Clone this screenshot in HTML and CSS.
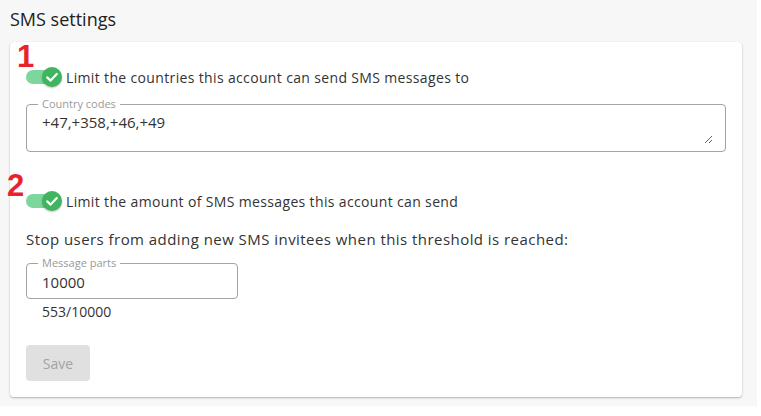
FILE: index.html
```html
<!DOCTYPE html>
<html lang="en">

<head>
  <meta charset="UTF-8">
  <title>SMS settings</title>
  <link rel="stylesheet" href="styles.css">
</head>

<body>
  <div class="page">
    <h2 class="title">SMS settings</h2>

    <div class="card">
      <span class="marker marker-one">1</span>
      <label class="switch-row">
        <span class="switch">
          <span class="knob">
            <svg width="20" height="20" viewBox="0 0 20 20"><polyline points="5.2,10.4 8.6,13.6 14.8,7" fill="none" stroke="#fff" stroke-width="2.2" stroke-linecap="round" stroke-linejoin="round"/></svg>
          </span>
        </span>
        Limit the countries this account can send SMS messages to
      </label>

      <fieldset class="field field-wide">
        <legend>Country codes</legend>
        <textarea class="codes">+47,+358,+46,+49</textarea>
      </fieldset>

      <span class="marker marker-two">2</span>
      <label class="switch-row switch-row-two">
        <span class="switch">
          <span class="knob">
            <svg width="20" height="20" viewBox="0 0 20 20"><polyline points="5.2,10.4 8.6,13.6 14.8,7" fill="none" stroke="#fff" stroke-width="2.2" stroke-linecap="round" stroke-linejoin="round"/></svg>
          </span>
        </span>
        Limit the amount of SMS messages this account can send
      </label>

      <p class="hint">Stop users from adding new SMS invitees when this threshold is reached:</p>

      <fieldset class="field field-small">
        <legend>Message parts</legend>
        <input class="parts" type="text" value="10000">
      </fieldset>
      <div class="usage">553/10000</div>

      <button class="save" disabled>Save</button>
    </div>
  </div>
</body>

</html>
```

FILE: styles.css
```css
body {
  margin: 0;
  background: #fff;
  font-family: "Open Sans", "Liberation Sans", sans-serif;
  color: #333;
}
.page {
  width: 757px;
  height: 406px;
  box-sizing: border-box;
  padding: 9px 15px 0 10px;
  background: #f7f7f7;
}
.title {
  margin: 0 0 13px 0;
  font-size: 18px;
  line-height: 20px;
  font-weight: 400;
  color: #222;
}
.card {
  position: relative;
  height: 355px;
  box-sizing: border-box;
  padding: 24px 16px 16px 16px;
  background: #fff;
  border-radius: 4px;
  box-shadow: 0 1px 2px rgba(0, 0, 0, 0.28), 0 0 1px rgba(0, 0, 0, 0.08);
}
.marker {
  position: absolute;
  font-family: "Liberation Sans", sans-serif;
  font-weight: 700;
  font-size: 31px;
  line-height: 1;
  color: #e8232b;
}
.marker-one {
  left: 7px;
  top: -1px;
}
.marker-two {
  left: -3px;
  top: 128px;
}
.switch-row {
  display: flex;
  align-items: center;
  height: 22px;
  font-size: 14px;
  letter-spacing: 0.35px;
  color: #333;
}
.switch-row-two {
  margin-top: 38px;
}
.switch {
  position: relative;
  width: 34px;
  height: 14px;
  margin: 0 6px 0 0;
  border-radius: 7px;
  background: #7dd69b;
  flex: none;
}
.knob {
  position: absolute;
  right: -2px;
  top: -3px;
  width: 20px;
  height: 20px;
  border-radius: 50%;
  background: #40b45f;
  box-shadow: 0 1px 2px rgba(0, 0, 0, 0.25);
}
.knob svg {
  display: block;
}
.field {
  margin: 10px 0 0 0;
  padding: 0;
  border: 1px solid #a3a3a3;
  border-radius: 4px;
  min-width: 0;
}
.field legend {
  margin-left: 11px;
  padding: 0 4px;
  font-size: 11px;
  line-height: 12px;
  color: #9a9a9a;
}
.field-wide {
  width: 700px;
  box-sizing: border-box;
}
.field-small {
  width: 212px;
  box-sizing: border-box;
  margin-top: 8px;
}
.codes {
  display: block;
  width: calc(100% - 12px);
  height: 34px;
  margin: 0 0 7px 0;
  padding: 2px 0 0 15px;
  box-sizing: border-box;
  border: 0;
  outline: 0;
  font-family: inherit;
  font-size: 15px;
  line-height: 20px;
  color: #333;
  background: transparent;
}
.parts {
  display: block;
  width: 100%;
  height: 29px;
  box-sizing: border-box;
  padding: 3px 0 6px 15px;
  border: 0;
  outline: 0;
  font-family: inherit;
  font-size: 15px;
  line-height: 20px;
  color: #333;
  background: transparent;
}
.hint {
  margin: 17px 0 0 0;
  font-size: 15px;
  line-height: 20px;
  letter-spacing: 0.45px;
}
.usage {
  margin: 4px 0 0 16px;
  font-size: 14px;
  line-height: 18px;
  color: #333;
}
.save {
  display: block;
  margin-top: 24px;
  width: 64px;
  height: 36px;
  border: 0;
  border-radius: 4px;
  background: #e0e0e0;
  color: #a3a3a3;
  font-family: inherit;
  font-size: 14px;
}
```
